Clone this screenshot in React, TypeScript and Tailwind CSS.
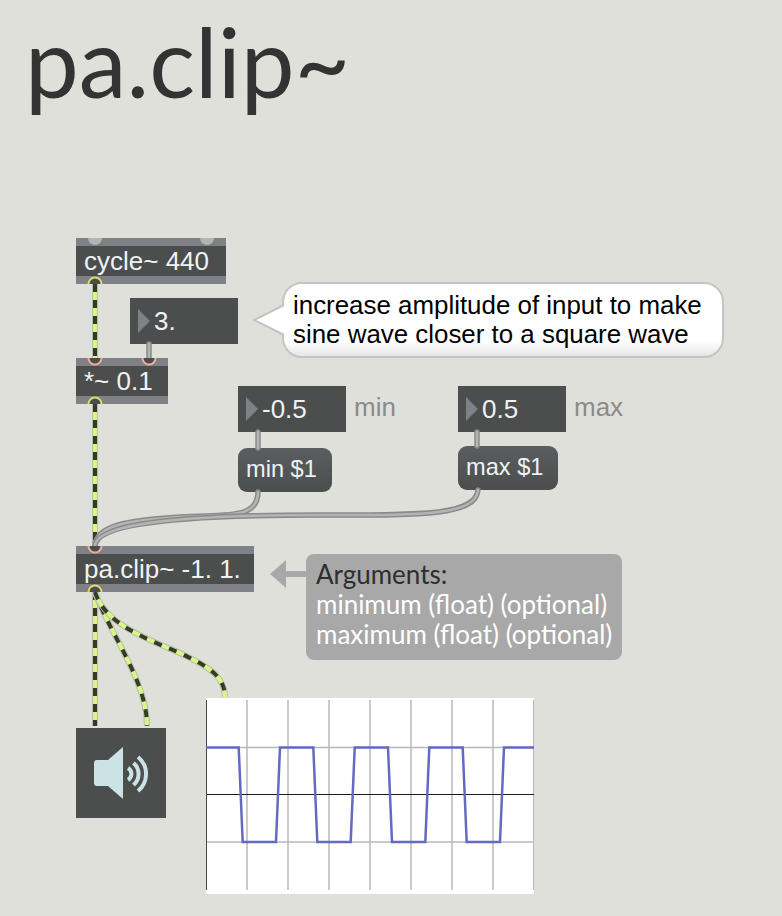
const sans = "font-['Liberation_Sans',Arial,sans-serif]";

function ObjectBox({ className, text }: { className: string; text: string }) {
  return (
    <div className={`absolute flex h-[46px] flex-col bg-[#808186] ${className}`}>
      <div className="mt-[8px] flex h-[30px] items-center bg-[#4b4e4d] pl-[8px] text-[26px] leading-none whitespace-pre text-[#eef2f5]">
        {text}
      </div>
    </div>
  );
}

function NumberBox({ className, text }: { className: string; text: string }) {
  return (
    <div className={`absolute flex h-[46px] w-[108px] items-center bg-[#4b4e4d] pl-[8px] text-[26px] leading-none text-[#eef2f5] ${className}`}>
      <svg width="12" height="24" viewBox="0 0 12 24" className="mr-[4px] shrink-0">
        <path d="M0 0 L12 12 L0 24 Z" fill="#808186" />
      </svg>
      {text}
    </div>
  );
}

function MessageBox({ className, text }: { className: string; text: string }) {
  return (
    <div className={`absolute flex h-[44px] items-center rounded-[9px] bg-gradient-to-b from-[#5b5e60] to-[#4b4e4d] pl-[8px] text-[23.6px] leading-none text-[#eef2f5] ${className}`}>
      {text}
    </div>
  );
}

function SignalCord({ d }: { d: string }) {
  return (
    <g fill="none">
      <path d={d} stroke="#b9bbb3" strokeWidth="6" />
      <path d={d} stroke="#d8f784" strokeWidth="4" />
      <path d={d} stroke="#343b29" strokeWidth="4" strokeDasharray="8 8" />
    </g>
  );
}

function ControlCord({ d }: { d: string }) {
  return (
    <g fill="none">
      <path d={d} stroke="#8a8a8a" strokeWidth="5.5" strokeLinecap="round" />
      <path d={d} stroke="#b4b4b2" strokeWidth="2.5" strokeLinecap="round" />
    </g>
  );
}

// inlet / outlet half-circles that sit over the box edges
function Outlet({ x, y }: { x: number; y: number }) {
  return <path d={`M${x - 6.5} ${y} A6.5 6.5 0 0 1 ${x + 6.5} ${y}`} fill="#4b4e4d" stroke="#dcdc6c" strokeWidth="2" />;
}

function Inlet({ x, y }: { x: number; y: number }) {
  return <path d={`M${x - 6.5} ${y} A6.5 6.5 0 0 0 ${x + 6.5} ${y}`} fill="#4b4e4d" stroke="#f0ac9f" strokeWidth="2" />;
}

function Scope() {
  const verticals = [247, 288, 329, 370, 411, 452, 493];
  return (
    <svg width="328" height="196" viewBox="206 698 328 196" className="absolute top-[698px] left-[206px] bg-white">
      {verticals.map((x) => (
        <line key={x} x1={x} x2={x} y1="700" y2="890" stroke="#b8b8b8" strokeWidth="1.5" />
      ))}
      <line x1="533.5" x2="533.5" y1="700" y2="890" stroke="#b8b8b8" />
      <line x1="206" x2="534" y1="747.5" y2="747.5" stroke="#b8b8b8" strokeWidth="1.5" />
      <line x1="206" x2="534" y1="842" y2="842" stroke="#b8b8b8" strokeWidth="1.5" />
      <line x1="206" x2="534" y1="794.5" y2="794.5" stroke="#1c1c1c" strokeWidth="1" />
      <line x1="206.5" x2="206.5" y1="700" y2="890" stroke="#4a4a4a" />
      <path
        d="M206 747.5 H238.7 L242.7 842 H276 L280 747.5 H313.3 L317.3 842 H350.7 L354.7 747.5 H388 L392 842 H425.3 L429.3 747.5 H462.7 L466.7 842 H500 L504 747.5 H534"
        fill="none"
        stroke="#6469c4"
        strokeWidth="2.5"
      />
    </svg>
  );
}

export default function App() {
  return (
    <div className={`relative h-[916px] w-[782px] overflow-hidden bg-[#dfe0da] ${sans}`}>
      {/* Title */}
      <h1 className="pt-[6px] pl-[25px] font-['Lato',sans-serif] text-[96px] leading-[110px] font-normal text-[#333333]">
        pa.clip~
      </h1>

      {/* Patch objects */}
      <ObjectBox className="top-[238px] left-[76px] w-[150px]" text="cycle~ 440" />
      <NumberBox className="top-[298px] left-[130px]" text="3." />
      <ObjectBox className="top-[358px] left-[76px] w-[92px]" text="*~ 0.1" />
      <NumberBox className="top-[386px] left-[238px]" text="-0.5" />
      <NumberBox className="top-[386px] left-[458px]" text="0.5" />
      <div className="absolute top-[393px] left-[354px] text-[26px] leading-[28px] text-[#8a8a8a]">min</div>
      <div className="absolute top-[393px] left-[574px] text-[26px] leading-[28px] text-[#8a8a8a]">max</div>
      <MessageBox className="top-[448px] left-[238px] w-[94px]" text="min $1" />
      <MessageBox className="top-[446px] left-[458px] w-[100px]" text="max $1" />
      <ObjectBox className="top-[546px] left-[76px] w-[178px]" text="pa.clip~ -1. 1." />

      {/* Speech bubble */}
      <div className="absolute top-[282px] left-[282px] h-[76px] w-[442px] rounded-[20px] border-2 border-[#c4c4c0] bg-gradient-to-b from-white from-80% to-[#e6e6e6] pt-[7px] pl-[9px] text-[25.9px] leading-[29px] whitespace-nowrap text-black">
        <div>increase amplitude of input to make</div>
        <div>sine wave closer to a square wave</div>
      </div>
      <svg width="35" height="34" viewBox="0 0 35 34" className="absolute top-[303px] left-[251px]">
        <path d="M33 2 L3 17 L33 32" fill="#ffffff" stroke="#c4c4c0" strokeWidth="2" />
      </svg>

      {/* Arguments note */}
      <svg width="36" height="28" viewBox="0 0 36 28" className="absolute top-[560px] left-[270px]">
        <path d="M0 14 L16 0 V11 H36 V17 H16 V28 Z" fill="#a8a8a8" />
      </svg>
      <div className="absolute top-[554px] left-[306px] h-[106px] w-[316px] rounded-[8px] bg-[#a8a8a8] pt-[5px] pl-[10px] font-['Lato',sans-serif] text-[26px] leading-[30px] whitespace-nowrap text-white">
        <div className="text-[#2e2e2e]">Arguments:</div>
        <div>minimum (float) (optional)</div>
        <div>maximum (float) (optional)</div>
      </div>

      {/* Speaker */}
      <div className="absolute top-[728px] left-[76px] size-[90px] bg-[#4b4e4d]">
        <svg width="90" height="90" viewBox="76 728 90 90">
          <path d="M97 760 H108 L123 747 V799 L108 786 H97 Q94 786 94 783 V763 Q94 760 97 760 Z" fill="#cce3e6" />
          <g fill="none" stroke="#cce3e6" strokeWidth="4">
            <path d="M128 768 A7 7 0 0 1 128 780" />
            <path d="M133.5 763 A14.5 14.5 0 0 1 133.5 785" />
            <path d="M138 757 A22 22 0 0 1 138 791" />
          </g>
        </svg>
      </div>

      <Scope />

      {/* Patch cords */}
      <svg width="782" height="916" viewBox="0 0 782 916" className="pointer-events-none absolute top-0 left-0">
        <SignalCord d="M95 284 V358" />
        <SignalCord d="M95 404 V546" />
        <SignalCord d="M95 592 V726" />
        <SignalCord d="M95 592 C110 635 147 680 147 726" />
        <SignalCord d="M95 592 C105 625 150 640 180 653 C205 665 225 675 225 697" />
        <ControlCord d="M149 344 V358" />
        <ControlCord d="M258 432 V448" />
        <ControlCord d="M477 432 V446" />
        <ControlCord d="M258 492 C258 520 225 514 180 517 C130 520 96 525 95 546" />
        <ControlCord d="M478 490 C476 516 420 515 320 515 C210 515 96 520 95 546" />
        <Outlet x={95} y={284} />
        <Outlet x={95} y={404} />
        <Outlet x={95} y={592} />
        <Inlet x={95} y={358} />
        <Inlet x={149} y={358} />
        <Inlet x={95} y={546} />
        <path d="M88 238 A7 7 0 0 0 102 238 Z" fill="#b4b4b4" />
        <path d="M200 238 A7 7 0 0 0 214 238 Z" fill="#b4b4b4" />
      </svg>
    </div>
  );
}
